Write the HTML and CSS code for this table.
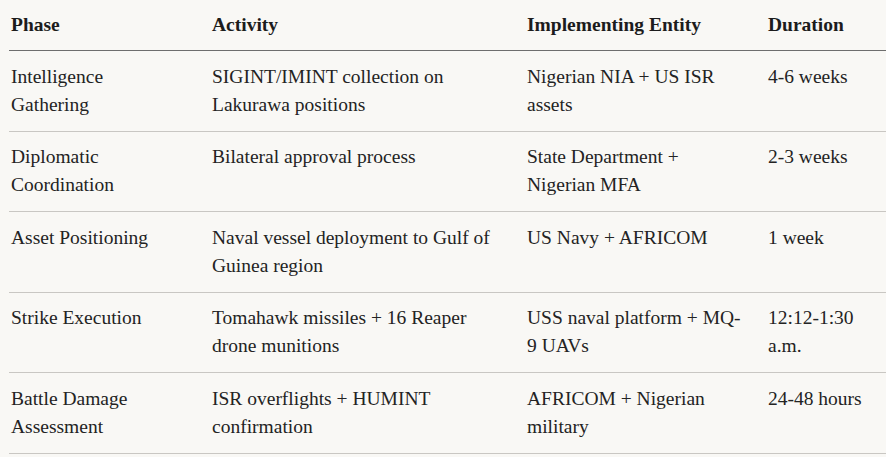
FILE: index.html
```html
<!DOCTYPE html>
<html lang="en">
<head>
<meta charset="utf-8">
<title>Operation timeline</title>
<link rel="stylesheet" href="styles.css">
</head>
<body>
<table class="plan">
  <colgroup>
    <col class="c1"><col class="c2"><col class="c3"><col class="c4">
  </colgroup>
  <thead>
    <tr><th>Phase</th><th>Activity</th><th>Implementing Entity</th><th>Duration</th></tr>
  </thead>
  <tbody>
    <tr><td>Intelligence Gathering</td><td>SIGINT/IMINT collection on Lakurawa positions</td><td>Nigerian NIA + US ISR assets</td><td>4-6 weeks</td></tr>
    <tr><td>Diplomatic Coordination</td><td>Bilateral approval process</td><td>State Department + Nigerian MFA</td><td>2-3 weeks</td></tr>
    <tr><td>Asset Positioning</td><td>Naval vessel deployment to Gulf of Guinea region</td><td>US Navy + AFRICOM</td><td>1 week</td></tr>
    <tr><td>Strike Execution</td><td>Tomahawk missiles + 16 Reaper drone munitions</td><td>USS naval platform + MQ-9 UAVs</td><td>12:12-1:30 a.m.</td></tr>
    <tr><td>Battle Damage Assessment</td><td>ISR overflights + HUMINT confirmation</td><td>AFRICOM + Nigerian military</td><td>24-48 hours</td></tr>
  </tbody>
</table>
</body>
</html>
```
FILE: styles.css
```css
html, body {
  margin: 0;
  background: #f9f8f5;
}
body {
  padding-left: 9px;
  font-family: "Liberation Serif", "Times New Roman", serif;
  font-size: 19.5px;
  color: #232323;
}
.plan {
  width: 877px;
  border-collapse: collapse;
  table-layout: fixed;
}
.c1 { width: 201px; }
.c2 { width: 315px; }
.c3 { width: 241px; }
.c4 { width: 120px; }
.plan th,
.plan td {
  text-align: left;
  vertical-align: top;
  padding: 11.5px 12px 11.5px 2px;
  line-height: 28.25px;
}
.plan th:nth-child(1),
.plan td:nth-child(1) { padding-right: 39px; }
.plan th:nth-child(2),
.plan td:nth-child(2) { padding-right: 13px; }
.plan th:nth-child(3),
.plan td:nth-child(3) { padding-right: 22px; }
.plan th:nth-child(4),
.plan td:nth-child(4) { padding-right: 0; }
.plan th {
  padding-top: 11px;
  padding-bottom: 10.75px;
  font-weight: bold;
  color: #1c1c1c;
  border-bottom: 1px solid #6e6e6e;
}
.plan td {
  border-bottom: 1px solid #c9c7c3;
}
```
